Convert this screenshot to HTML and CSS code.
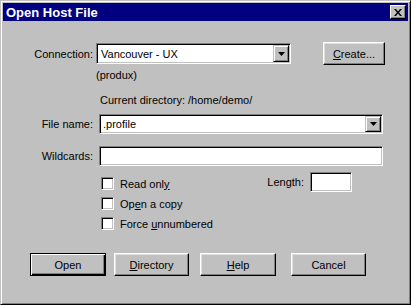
FILE: index.html
```html
<!DOCTYPE html>
<html lang="en">
<head>
    <meta charset="UTF-8">
    <title>Open Host File</title>
    <link rel="stylesheet" href="styles.css">
</head>
<body>
    <div class="window">
        <div class="titlebar">
            <span class="title">Open Host File</span>
            <span class="close">
                <svg width="8" height="7" viewBox="0 0 8 7"><polygon points="0,0 2,0 4,2.5 6,0 8,0 5,3.5 8,7 6,7 4,4.5 2,7 0,7 3,3.5" fill="#000"/></svg>
            </span>
        </div>

        <!-- Connexion -->
        <div class="row rowConn">
            <span class="lbl">Connection:</span>
            <div class="combo comboConn">
                <span class="comboText">Vancouver - UX</span>
                <span class="drop"><svg width="7" height="4" viewBox="0 0 7 4"><polygon points="0,0 7,0 3.5,4" fill="#000"/></svg></span>
            </div>
            <div class="btn btnCreate"><span><u>C</u>reate...</span></div>
        </div>
        <div class="note">(produx)</div>
        <div class="curdir">Current directory: /home/demo/</div>

        <!-- Fichier -->
        <div class="row rowFile">
            <span class="lbl">File name:</span>
            <div class="combo comboFile">
                <span class="comboText small">.profile</span>
                <span class="drop"><svg width="7" height="4" viewBox="0 0 7 4"><polygon points="0,0 7,0 3.5,4" fill="#000"/></svg></span>
            </div>
        </div>
        <div class="row rowWild">
            <span class="lbl">Wildcards:</span>
            <div class="field fieldWild"></div>
        </div>

        <!-- Options -->
        <div class="options">
            <div class="checks">
                <div class="check"><span class="box"></span><span>Read onl<u>y</u></span></div>
                <div class="check"><span class="box"></span><span>Op<u>e</u>n a copy</span></div>
                <div class="check"><span class="box"></span><span>Force <u>u</u>nnumbered</span></div>
            </div>
            <div class="length">
                <span>Length:</span>
                <div class="field fieldLen"></div>
            </div>
        </div>

        <div class="buttons">
            <div class="btn btnDefault">Open</div>
            <div class="btn btnDir"><span><u>D</u>irectory</span></div>
            <div class="btn btnHelp"><span><u>H</u>elp</span></div>
            <div class="btn btnCancel">Cancel</div>
        </div>
    </div>
</body>
</html>
```

FILE: styles.css
```css
body {
    margin: 0;
    font-family: "Liberation Sans", Arial, sans-serif;
    font-size: 11px;
    color: #000;
}
.window {
    width: 411px;
    height: 305px;
    box-sizing: border-box;
    background: #c0c0c0;
    border: 1px solid;
    border-color: #c0c0c0 #000 #000 #c0c0c0;
    box-shadow: inset 1px 1px #fff, inset -1px -1px #808080;
    padding: 2px;
}
.titlebar {
    display: flex;
    align-items: center;
    height: 18px;
    background: #000080;
    color: #fff;
    font-weight: bold;
    font-size: 13px;
    padding-left: 3px;
}
.title {
    flex: 1;
}
.close {
    width: 16px;
    height: 14px;
    margin-right: 2px;
    box-sizing: border-box;
    background: #c0c0c0;
    border: 1px solid;
    border-color: #fff #000 #000 #fff;
    box-shadow: inset -1px -1px #808080;
    display: flex;
    align-items: center;
    justify-content: center;
}
.row {
    display: flex;
    align-items: center;
}
.lbl {
    width: 90px;
    text-align: right;
}
/* champs en creux */
.combo, .field, .box {
    box-sizing: border-box;
    background: #fff;
    border: 1px solid;
    border-color: #808080 #fff #fff #808080;
    box-shadow: inset 1px 1px #000, inset -1px -1px #c0c0c0;
}
.combo {
    display: flex;
    align-items: center;
    padding: 1px;
}
.comboText {
    flex: 1;
    padding-left: 3px;
}
.comboText.small {
    padding-left: 2px;
}
.drop {
    width: 16px;
    align-self: stretch;
    box-sizing: border-box;
    background: #c0c0c0;
    border: 1px solid;
    border-color: #c0c0c0 #000 #000 #c0c0c0;
    box-shadow: inset 1px 1px #fff, inset -1px -1px #808080;
    display: flex;
    align-items: center;
    justify-content: center;
}
.btn {
    box-sizing: border-box;
    width: 76px;
    height: 23px;
    background: #c0c0c0;
    border: 1px solid;
    border-color: #fff #000 #000 #fff;
    box-shadow: inset -1px -1px #808080, inset 1px 1px #dfdfdf;
    display: flex;
    align-items: center;
    justify-content: center;
}
.btnDefault {
    border-color: #000;
    box-shadow: inset 1px 1px #fff, inset -1px -1px #000, inset -2px -2px #808080;
}
.rowConn {
    margin-top: 21px;
    height: 23px;
}
.comboConn {
    width: 195px;
    height: 21px;
    margin-left: 3px;
}
.btnCreate {
    width: 62px;
    margin-left: 32px;
}
.note {
    margin-top: 4px;
    padding-left: 93px;
    line-height: 13px;
}
.curdir {
    margin-top: 12px;
    padding-left: 97px;
    line-height: 13px;
}
.rowFile {
    margin-top: 7px;
    height: 20px;
}
.comboFile {
    width: 284px;
    height: 20px;
    margin-left: 6px;
}
.rowWild {
    margin-top: 12px;
    height: 20px;
}
.fieldWild {
    width: 284px;
    height: 20px;
    margin-left: 6px;
}
.options {
    display: flex;
    margin-top: 6px;
    padding-left: 98px;
    padding-right: 56px;
}
.checks {
    padding-top: 5px;
}
.check {
    display: flex;
    align-items: center;
    height: 13px;
    margin-bottom: 7px;
}
.box {
    width: 13px;
    height: 13px;
    margin-right: 6px;
}
.length {
    margin-left: auto;
    display: flex;
    align-items: center;
    height: 20px;
}
.fieldLen {
    width: 42px;
    height: 20px;
    margin-left: 6px;
}
.buttons {
    display: flex;
    margin-top: 16px;
    padding-left: 27px;
}
.btnDir {
    width: 75px;
    margin-left: 8px;
}
.btnHelp {
    margin-left: 11px;
}
.btnCancel {
    width: 75px;
    margin-left: 15px;
}
```
